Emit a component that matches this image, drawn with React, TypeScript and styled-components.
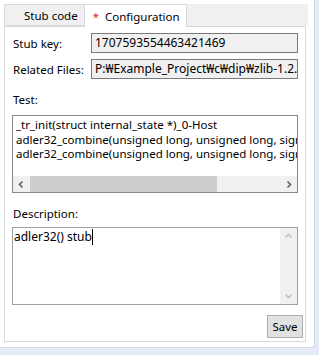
import styled, { createGlobalStyle } from "styled-components";

const GlobalStyle = createGlobalStyle`
  html, body {
    margin: 0;
    padding: 0;
    background: #e5eaf8;
  }
  body {
    font-family: "Noto Sans", "Liberation Sans", sans-serif;
    font-size: 11.5px;
    color: #000;
  }
`;

const Window = styled.div`
  width: 315px;
  height: 348px;
  box-sizing: border-box;
  padding: 4px 0 0 4px;
  background: #fff;
  border-right: 1px solid #d4d8e2;
  border-bottom: 1px solid #d4d8e2;
  border-bottom-right-radius: 4px;
`;

const TabStrip = styled.div`
  display: flex;
  width: 304px;
  height: 22px;
  background: #f0f0f0;
`;

const Tab = styled.div<{ $active?: boolean }>`
  display: flex;
  align-items: center;
  box-sizing: border-box;
  height: ${({ $active }) => ($active ? "23px" : "22px")};
  padding: 0 6px 0 ${({ $active }) => ($active ? "8px" : "19px")};
  background: ${({ $active }) => ($active ? "#fff" : "#f0f0f0")};
  border: 1px solid #d9d9d9;
  border-bottom: ${({ $active }) => ($active ? "none" : "1px solid #d9d9d9")};
  border-left: ${({ $active }) => ($active ? "none" : "1px solid #d9d9d9")};
  white-space: nowrap;
  position: relative;
  z-index: 1;
`;

const Dirty = styled.span`
  color: #e0202a;
  margin-right: 6px;
`;

const Panel = styled.div`
  width: 302px;
  height: 316px;
  box-sizing: border-box;
  border: 1px solid #d9d9d9;
  background: #fff;
  padding: 6px 7px 0 7px;
  display: flex;
  flex-direction: column;
`;

const FieldRow = styled.div`
  display: flex;
  align-items: center;
  height: 20px;
  margin-bottom: 6px;
`;

const FieldLabel = styled.div`
  width: 78px;
  padding-left: 1px;
  flex: none;
`;

const ReadOnlyInput = styled.div`
  flex: 1;
  height: 20px;
  box-sizing: border-box;
  border: 1px solid #7a7a7a;
  background: #f0f0f0;
  padding: 0 3px;
  font-size: 12px;
  line-height: 18px;
  white-space: nowrap;
  overflow: hidden;
`;

const BlockLabel = styled.div<{ $top: number; $bottom: number }>`
  padding-left: 1px;
  height: 14px;
  line-height: 14px;
  margin: ${({ $top, $bottom }) => `${$top}px 0 ${$bottom}px`};
`;

const ListBox = styled.div`
  height: 78px;
  box-sizing: border-box;
  border: 1px solid #828790;
  display: flex;
  flex-direction: column;
`;

const ListItems = styled.div`
  flex: 1;
  padding: 2px 0 0 3px;
  overflow: hidden;
`;

const ListItem = styled.div`
  height: 14.5px;
  line-height: 14.5px;
  white-space: nowrap;
`;

const HScroll = styled.div`
  height: 16px;
  display: flex;
  background: #f0f0f0;
`;

const ArrowBox = styled.div`
  width: 17px;
  display: flex;
  align-items: center;
  justify-content: center;
  flex: none;
`;

const HTrack = styled.div`
  flex: 1;
  display: flex;
`;

const HThumb = styled.div`
  background: #cdcdcd;
`;

const MemoBox = styled.div`
  height: 78px;
  box-sizing: border-box;
  border: 1px solid #a0a0a0;
  display: flex;
`;

const MemoText = styled.div`
  flex: 1;
  padding: 1px 0 0 1px;
  font-size: 12px;
  line-height: 16px;
`;

const Caret = styled.span`
  display: inline-block;
  width: 1px;
  height: 16px;
  background: #000;
  vertical-align: top;
`;

const VScroll = styled.div`
  width: 17px;
  background: #f0f0f0;
  display: flex;
  flex-direction: column;
  justify-content: space-between;
`;

const VArrow = styled.div`
  height: 17px;
  display: flex;
  align-items: center;
  justify-content: center;
`;

const Footer = styled.div`
  display: flex;
  justify-content: flex-end;
  margin-right: -5px;
  margin-top: 10px;
`;

const Button = styled.div`
  width: 36px;
  height: 23px;
  box-sizing: border-box;
  border: 1px solid #adadad;
  background: #e1e1e1;
  display: flex;
  align-items: center;
  justify-content: center;
`;

function Chevron({ dir, color }: { dir: "left" | "right" | "up" | "down"; color: string }) {
  const paths: Record<string, string> = {
    left: "M5.5 1.5 L2.5 4.5 L5.5 7.5",
    right: "M3.5 1.5 L6.5 4.5 L3.5 7.5",
    up: "M1.5 5.5 L4.5 2.5 L7.5 5.5",
    down: "M1.5 3.5 L4.5 6.5 L7.5 3.5",
  };
  return (
    <svg width="9" height="9" viewBox="0 0 9 9">
      <path d={paths[dir]} fill="none" stroke={color} strokeWidth="1.6" />
    </svg>
  );
}

const testItems = [
  "_tr_init(struct internal_state *)_0-Host",
  "adler32_combine(unsigned long, unsigned long, signed long)_0-Host",
  "adler32_combine(unsigned long, unsigned long, signed long)_1-Host",
];

export default function App() {
  return (
    <>
      <GlobalStyle />
      <Window>
        <TabStrip>
          <Tab>Stub code</Tab>
          <Tab $active>
            <Dirty>*</Dirty>Configuration
          </Tab>
        </TabStrip>
        <Panel>
          <FieldRow>
            <FieldLabel>Stub key:</FieldLabel>
            <ReadOnlyInput>1707593554463421469</ReadOnlyInput>
          </FieldRow>
          <FieldRow>
            <FieldLabel>Related Files:</FieldLabel>
            <ReadOnlyInput>P:₩Example_Project₩c₩dip₩zlib-1.2.3₩adler32.c</ReadOnlyInput>
          </FieldRow>
          <BlockLabel $top={8} $bottom={8}>Test:</BlockLabel>
          <ListBox>
            <ListItems>
              {testItems.map((t, i) => (
                <ListItem key={i}>{t}</ListItem>
              ))}
            </ListItems>
            <HScroll>
              <ArrowBox>
                <Chevron dir="left" color="#606060" />
              </ArrowBox>
              <HTrack>
                <HThumb style={{ width: 187 }} />
              </HTrack>
              <ArrowBox>
                <Chevron dir="right" color="#606060" />
              </ArrowBox>
            </HScroll>
          </ListBox>
          <BlockLabel $top={14} $bottom={6}>Description:</BlockLabel>
          <MemoBox>
            <MemoText>
              adler32() stub<Caret />
            </MemoText>
            <VScroll>
              <VArrow>
                <Chevron dir="up" color="#c0c0c0" />
              </VArrow>
              <VArrow>
                <Chevron dir="down" color="#c0c0c0" />
              </VArrow>
            </VScroll>
          </MemoBox>
          <Footer>
            <Button>Save</Button>
          </Footer>
        </Panel>
      </Window>
    </>
  );
}
